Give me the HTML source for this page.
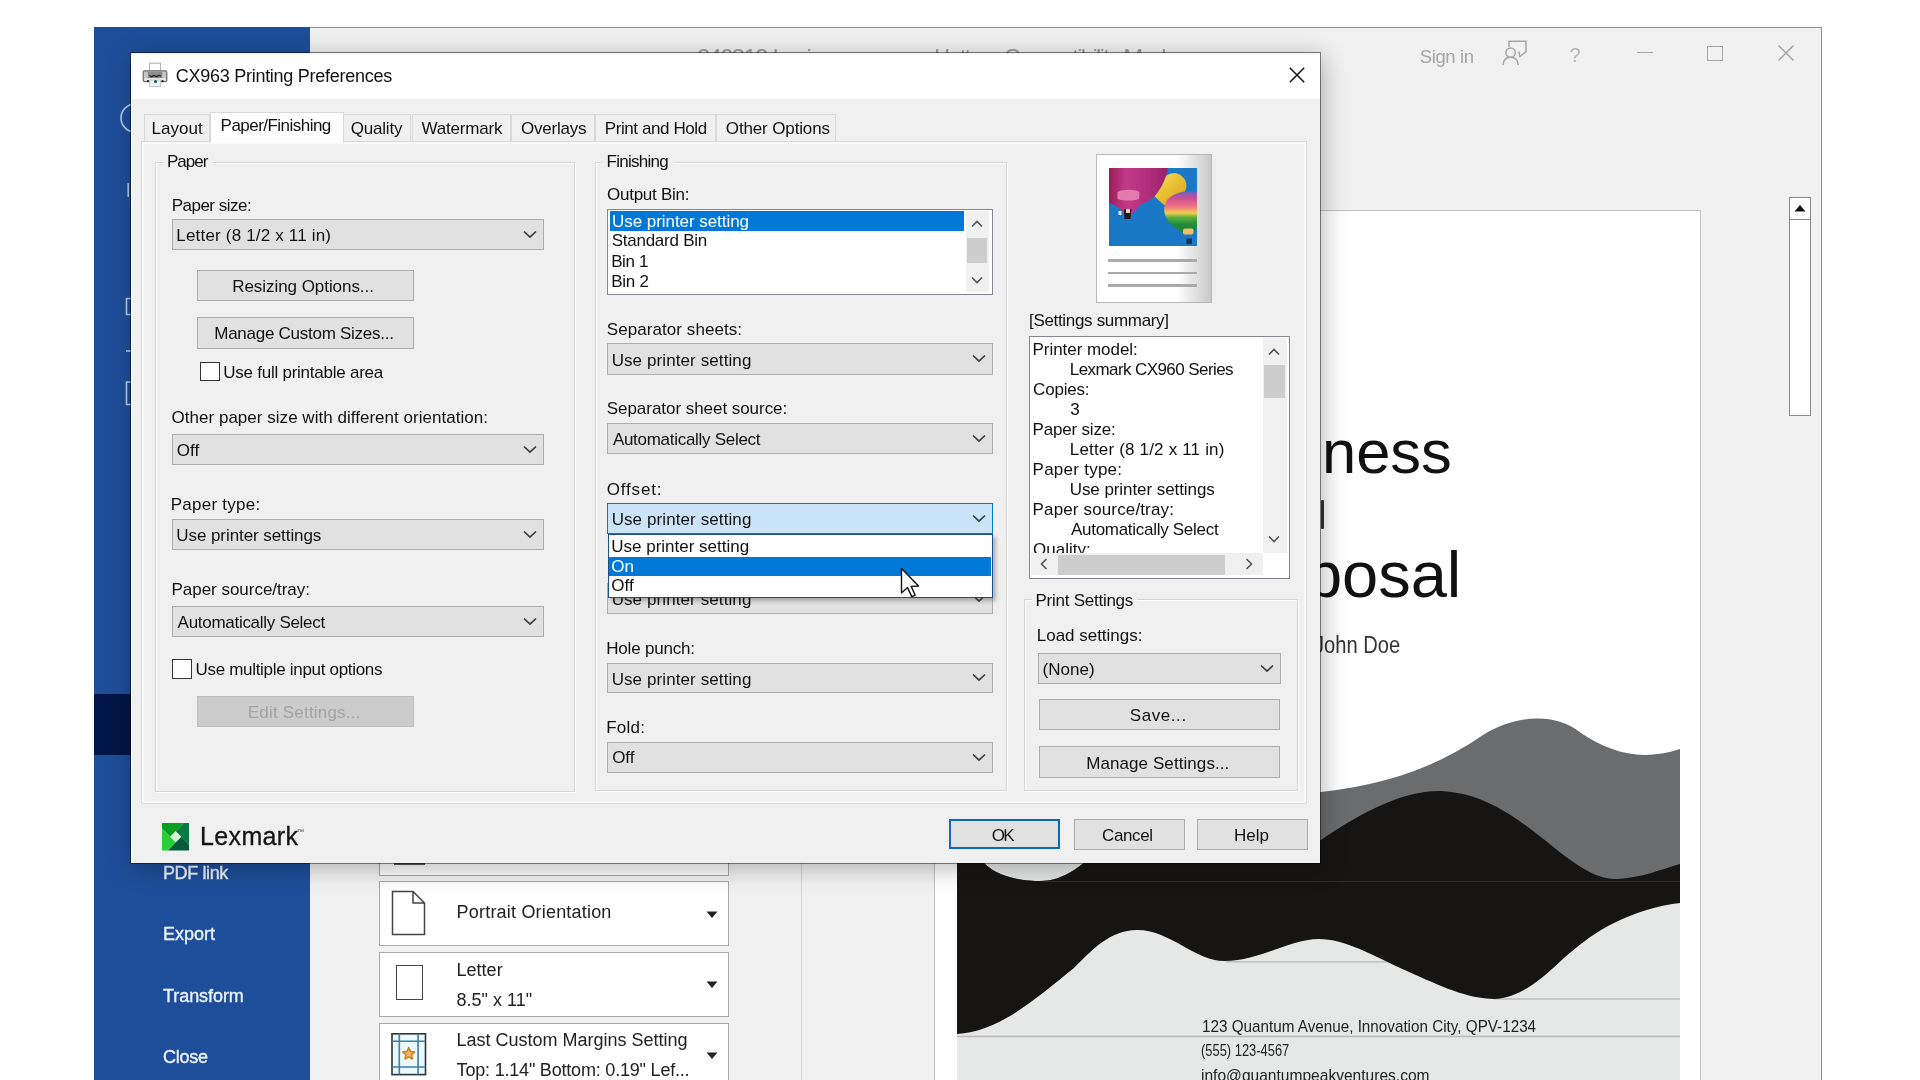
<!DOCTYPE html><html><head><meta charset="utf-8"><style>
html,body{margin:0;padding:0}
body{width:1920px;height:1080px;position:relative;overflow:hidden;background:#fff;font-family:"Liberation Sans",sans-serif;}
.t{position:absolute;white-space:nowrap;}
</style></head><body><div style="position:absolute;left:0;top:0;width:1920px;height:1080px;overflow:hidden;filter:blur(0.5px)">
<div style="position:absolute;left:94px;top:27px;width:1728px;height:1060px;background:#f1f1f1;border:1.5px solid #8f8f8f;border-bottom:none;box-sizing:border-box;"></div>
<div style="position:absolute;left:94px;top:27px;width:216px;height:1053px;background:#1e4e9a;box-shadow:inset 0 1px 0 #2c4a78;"></div>
<div style="position:absolute;left:94px;top:694px;width:216px;height:61px;background:#011548;"></div>
<div class="t" style="left:163.00px;top:862.26px;font-size:18px;line-height:22px;color:#eef3fb;letter-spacing:-0.387px;-webkit-text-stroke:0.35px #eef3fb;">PDF link</div>
<div class="t" style="left:163.00px;top:923.36px;font-size:18px;line-height:22px;color:#eef3fb;letter-spacing:-0.005px;-webkit-text-stroke:0.35px #eef3fb;">Export</div>
<div class="t" style="left:163.00px;top:984.56px;font-size:18px;line-height:22px;color:#eef3fb;letter-spacing:-0.068px;-webkit-text-stroke:0.35px #eef3fb;">Transform</div>
<div class="t" style="left:163.00px;top:1045.66px;font-size:18px;line-height:22px;color:#eef3fb;letter-spacing:-0.255px;-webkit-text-stroke:0.35px #eef3fb;">Close</div>
<div class="t" style="left:697.00px;top:42.98px;font-size:24px;line-height:30px;color:#9a9a9a;letter-spacing:-1.735px;">240312-business-proposal-letter  -  Compatibility Mode</div>
<div class="t" style="left:1419.70px;top:44.89px;font-size:18.5px;line-height:23px;color:#a5a5a5;letter-spacing:-0.378px;">Sign in</div>
<svg style="position:absolute;left:1495px;top:35px" width="40" height="35" viewBox="0 0 40 35"><g fill="none" stroke="#a8a8a8" stroke-width="1.5"><circle cx="15.6" cy="17.6" r="4.7"/><path d="M8 30 C8.5 24.5 11.5 22.3 15.6 22.3 C19.7 22.3 22.7 24.5 23.3 30"/><path d="M14 12 V6.3 H31 V16.8 L24.8 21.5 L23.8 16.5"/></g></svg>
<div class="t" style="left:1569.50px;top:42.57px;font-size:20px;line-height:25px;color:#b4b4b4;">?</div>
<div style="position:absolute;left:1637px;top:51.5px;width:16px;height:1.5px;background:#a5a5a5;"></div>
<div style="position:absolute;left:1707px;top:45.5px;width:15.5px;height:15.5px;border:1.5px solid #a5a5a5;box-sizing:border-box;"></div>
<svg style="position:absolute;left:1778px;top:45px" width="16" height="16" viewBox="0 0 16 16"><path d="M0.5 0.5 L15.5 15.5 M15.5 0.5 L0.5 15.5" stroke="#a5a5a5" stroke-width="1.5"/></svg>
<div style="position:absolute;left:379.2px;top:800px;width:350px;height:76px;background:#fff;border:1.5px solid #a8a8a8;box-sizing:border-box;"></div>
<div style="position:absolute;left:379.2px;top:881.4px;width:350px;height:64.60000000000002px;background:#fff;border:1.5px solid #a8a8a8;box-sizing:border-box;"></div>
<div style="position:absolute;left:379.2px;top:952px;width:350px;height:64.5px;background:#fff;border:1.5px solid #a8a8a8;box-sizing:border-box;"></div>
<div style="position:absolute;left:379.2px;top:1022.6px;width:350px;height:77.39999999999998px;background:#fff;border:1.5px solid #a8a8a8;box-sizing:border-box;"></div>
<div style="position:absolute;left:394px;top:862px;width:30.7px;height:2.5px;background:#555;"></div>
<svg style="position:absolute;left:391px;top:890px" width="36" height="46" viewBox="0 0 36 46"><path d="M1.5 1.5 H22 L33.5 13 V44.5 H1.5 Z M22 1.5 V13 H33.5" fill="#fff" stroke="#444" stroke-width="1.5"/></svg>
<div class="t" style="left:456.60px;top:900.76px;font-size:18px;line-height:22px;color:#222;letter-spacing:0.196px;">Portrait Orientation</div>
<svg style="position:absolute;left:706px;top:911px" width="12" height="8" viewBox="0 0 12 8"><path d="M0.5 0.5 H11.5 L6 7 Z" fill="#222"/></svg>
<div style="position:absolute;left:395.9px;top:965.3px;width:27.5px;height:35px;background:#fff;border:1.5px solid #444;box-sizing:border-box;"></div>
<div class="t" style="left:456.60px;top:958.86px;font-size:18px;line-height:22px;color:#222;">Letter</div>
<div class="t" style="left:456.60px;top:989.06px;font-size:18px;line-height:22px;color:#222;">8.5" x 11"</div>
<svg style="position:absolute;left:706px;top:981px" width="12" height="8" viewBox="0 0 12 8"><path d="M0.5 0.5 H11.5 L6 7 Z" fill="#222"/></svg>
<svg style="position:absolute;left:390px;top:1032px" width="38" height="46" viewBox="0 0 38 46"><rect x="2" y="1.8" width="33.5" height="40.8" fill="#eaf9fd" stroke="#333" stroke-width="1.6"/><g stroke="#3d7fa6" stroke-width="1.6"><path d="M9.3 1.8 V42.6 M28.1 1.8 V42.6 M2 9.3 H35.5 M2 35 H35.5"/></g><path d="M18.7 15.5 l1.8 3.9 l4.2 .5 l-3.1 2.9 l.8 4.2 l-3.7 -2.1 l-3.7 2.1 l.8 -4.2 l-3.1 -2.9 l4.2 -.5 Z" fill="#f2b860" stroke="#d07e18" stroke-width="1.5" stroke-linejoin="round"/></svg>
<div class="t" style="left:456.60px;top:1029.16px;font-size:18px;line-height:22px;color:#222;letter-spacing:-0.004px;">Last Custom Margins Setting</div>
<div class="t" style="left:456.60px;top:1058.76px;font-size:18px;line-height:22px;color:#222;letter-spacing:-0.197px;">Top: 1.14" Bottom: 0.19" Lef...</div>
<svg style="position:absolute;left:706px;top:1052px" width="12" height="8" viewBox="0 0 12 8"><path d="M0.5 0.5 H11.5 L6 7 Z" fill="#222"/></svg>
<div style="position:absolute;left:801px;top:800px;width:1.2px;height:280px;background:#d6d6d6;"></div>
<div style="position:absolute;left:933.5px;top:210px;width:767px;height:900px;background:#fff;border:1.2px solid #c3c3c3;box-sizing:border-box;"></div>
<svg style="position:absolute;left:0;top:0" width="1920" height="1080" viewBox="0 0 1920 1080">
<defs><clipPath id="pg"><rect x="957" y="200" width="723" height="900"/></clipPath></defs>
<g clip-path="url(#pg)">
<path d="M957 820 C1100 805 1250 800 1321 792 C1390 784 1440 765 1483 735 C1515 715 1555 712 1581 733 C1610 752 1640 762 1680 749 L1680 920 L957 920 Z" fill="#6b6c6d"/>
<path d="M975 858 L983 862 C1000 880 1030 881 1040 881 C1060 881 1075 870 1085 862 L1090 858 Z" fill="#e4e5e5"/>
<rect x="957" y="900" width="723" height="200" fill="#e6e7e7"/>
<path d="M1226 961.8 H1400 M957 1036.5 H1680" stroke="#b9b9b9" stroke-width="1.3"/>
<path d="M1494 999 H1680" stroke="#bdbdbd" stroke-width="1.3"/>
<path d="M957 840 L983 862 C1000 880 1030 881 1040 881 C1060 881 1075 870 1085 862 L1321 840 C1370 806 1410 790 1441 791 C1480 793 1510 812 1546 841 C1575 865 1597 880 1617 879 C1640 878 1660 870 1680 864 L1680 903 C1660 905 1635 912 1608 926 C1590 936 1578 946 1565 957 C1545 976 1520 999 1494 999 C1468 999 1440 986 1408 971.6 C1372 955 1345 939 1319 939 C1290 939 1260 961 1224.5 961 C1195 961 1170 930 1137 930 C1110 930 1092 950 1074 968 C1040 995 1000 1032 957 1034 Z" fill="#161514"/>
<path d="M1041 881.5 H1680" stroke="#2c2c2c" stroke-width="1"/>
</g></svg>
<div class="t" style="left:1202.30px;top:412.68px;font-size:61.5px;line-height:77px;color:#111;transform:scaleX(1.0000);transform-origin:0 0;">Business</div>
<div class="t" style="left:1204.75px;top:534.46px;font-size:65px;line-height:81px;color:#111;transform:scaleX(1.0000);transform-origin:0 0;">Proposal</div>
<div style="position:absolute;left:1320.5px;top:500px;width:3px;height:29px;background:#333;border-radius:1px;"></div>
<div class="t" style="left:1314.07px;top:631.35px;font-size:23.5px;line-height:29px;color:#333;transform:scaleX(0.8566);transform-origin:0 0;">John Doe</div>
<div class="t" style="left:1201.68px;top:1016.21px;font-size:17px;line-height:21px;color:#222;transform:scaleX(0.8965);transform-origin:0 0;">123 Quantum Avenue, Innovation City, QPV-1234</div>
<div class="t" style="left:1201.04px;top:1040.41px;font-size:17px;line-height:21px;color:#222;transform:scaleX(0.7594);transform-origin:0 0;">(555) 123-4567</div>
<div class="t" style="left:1201.38px;top:1064.61px;font-size:17px;line-height:21px;color:#222;transform:scaleX(0.9152);transform-origin:0 0;">info@quantumpeakventures.com</div>
<div style="position:absolute;left:1789px;top:197px;width:22px;height:23px;background:#fff;border:1.5px solid #8a8a8a;box-sizing:border-box;"></div>
<svg style="position:absolute;left:1794px;top:204px" width="12" height="8" viewBox="0 0 12 8"><path d="M0.5 7.5 H11.5 L6 1 Z" fill="#111"/></svg>
<div style="position:absolute;left:1789px;top:219px;width:22px;height:197px;background:#fff;border:1.5px solid #8a8a8a;box-sizing:border-box;"></div>
<svg style="position:absolute;left:100px;top:95px" width="40" height="320" viewBox="100 95 40 320"><g fill="none" stroke="#b7cdef" stroke-width="1.6"><circle cx="135" cy="118" r="14"/><path d="M128.2 183 V197"/><path d="M131 298.5 H126.5 V314.5 H131"/><path d="M126 351 H131"/><path d="M131 382 H126.5 V404.5 H131"/></g></svg>
<div style="position:absolute;left:129.5px;top:52px;width:1191.5px;height:811.8px;background:#f0f0f0;background-clip:padding-box;border:1.5px solid rgba(0,0,0,0.45);box-sizing:border-box;box-shadow:2px 4px 24px rgba(0,0,0,0.28), inset 1.5px 0 0 #f8f8f8;"></div>
<div style="position:absolute;left:131px;top:53.5px;width:1188.5px;height:45.5px;background:#fff;"></div>
<svg style="position:absolute;left:138px;top:58px" width="34" height="34" viewBox="0 0 34 34">
<rect x="11.5" y="5.2" width="11" height="8" fill="#fff" stroke="#b5b5b5" stroke-width="1.1"/>
<rect x="5.2" y="12.8" width="23.6" height="10.8" rx="1.5" fill="#c6c6c6" stroke="#6a6a6a" stroke-width="1.2"/>
<rect x="9.8" y="14" width="14.5" height="6" fill="#8c8c8c"/>
<path d="M11.5 17.5 l2 1.2 l2.5 -1.2 l2.5 1.2 l2.5 -1.2 l2 0.6" fill="none" stroke="#222" stroke-width="1.3"/>
<rect x="6.5" y="20.4" width="21" height="2.2" fill="#eeeeee"/>
<rect x="11.6" y="22" width="11" height="6.5" fill="#e4f6f8" stroke="#c4c4c4" stroke-width="1"/>
<circle cx="17.5" cy="23.6" r="1.5" fill="#0c5050"/>
<circle cx="10" cy="23" r="1" fill="#111"/><circle cx="24.5" cy="23" r="1" fill="#111"/>
</svg>
<div class="t" style="left:175.70px;top:64.56px;font-size:18px;line-height:22px;color:#111;letter-spacing:-0.261px;">CX963 Printing Preferences</div>
<svg style="position:absolute;left:1288.5px;top:67px" width="16" height="16" viewBox="0 0 16 16"><path d="M0.8 0.8 L15.2 15.2 M15.2 0.8 L0.8 15.2" stroke="#111" stroke-width="1.5"/></svg>
<div style="position:absolute;left:141px;top:141px;width:1166px;height:662.5px;background:#f0f0f0;border:1px solid #d9d9d9;box-shadow:inset -1.5px -1.5px 0 #fff, inset 2px 2px 0 #fafafa;box-sizing:border-box;"></div>
<div style="position:absolute;left:143.6px;top:114px;width:66.4px;height:27px;background:#f0f0f0;border:1px solid #d9d9d9;border-bottom:none;box-sizing:border-box;"></div>
<div class="t" style="left:151.40px;top:117.91px;font-size:17px;line-height:21px;color:#111;letter-spacing:0.052px;">Layout</div>
<div style="position:absolute;left:343.4px;top:114px;width:68.10000000000002px;height:27px;background:#f0f0f0;border:1px solid #d9d9d9;border-bottom:none;box-sizing:border-box;"></div>
<div class="t" style="left:350.70px;top:117.91px;font-size:17px;line-height:21px;color:#111;letter-spacing:-0.185px;">Quality</div>
<div style="position:absolute;left:411.5px;top:114px;width:99.19999999999999px;height:27px;background:#f0f0f0;border:1px solid #d9d9d9;border-bottom:none;box-sizing:border-box;"></div>
<div class="t" style="left:421.60px;top:117.91px;font-size:17px;line-height:21px;color:#111;letter-spacing:-0.198px;">Watermark</div>
<div style="position:absolute;left:510.7px;top:114px;width:84.59999999999997px;height:27px;background:#f0f0f0;border:1px solid #d9d9d9;border-bottom:none;box-sizing:border-box;"></div>
<div class="t" style="left:521.00px;top:117.91px;font-size:17px;line-height:21px;color:#111;letter-spacing:-0.239px;">Overlays</div>
<div style="position:absolute;left:595.3px;top:114px;width:120.90000000000009px;height:27px;background:#f0f0f0;border:1px solid #d9d9d9;border-bottom:none;box-sizing:border-box;"></div>
<div class="t" style="left:604.80px;top:117.91px;font-size:17px;line-height:21px;color:#111;letter-spacing:-0.418px;">Print and Hold</div>
<div style="position:absolute;left:716.2px;top:114px;width:119.79999999999995px;height:27px;background:#f0f0f0;border:1px solid #d9d9d9;border-bottom:none;box-sizing:border-box;"></div>
<div class="t" style="left:725.80px;top:117.91px;font-size:17px;line-height:21px;color:#111;letter-spacing:-0.136px;">Other Options</div>
<div style="position:absolute;left:209.5px;top:111.5px;width:134.5px;height:31.5px;background:#fff;border:1px solid #d9d9d9;border-bottom:none;box-sizing:border-box;"></div>
<div class="t" style="left:220.60px;top:114.61px;font-size:17px;line-height:21px;color:#111;letter-spacing:-0.530px;">Paper/Finishing</div>
<div style="position:absolute;left:154.5px;top:161.5px;width:420.5px;height:630.5px;border:1px solid #d5d5d5;box-shadow:inset 1px 1px 0 #fff, 1px 1px 0 #fff;box-sizing:border-box;"></div>
<div style="position:absolute;left:163px;top:155.5px;width:49.5px;height:12px;background:#f0f0f0;"></div>
<div class="t" style="left:167.00px;top:151.41px;font-size:17px;line-height:21px;color:#111;letter-spacing:-0.966px;">Paper</div>
<div class="t" style="left:171.70px;top:194.61px;font-size:17px;line-height:21px;color:#111;letter-spacing:-0.504px;">Paper size:</div>
<div style="position:absolute;left:172px;top:219.3px;width:371.70000000000005px;height:31.099999999999994px;background:#e1e1e1;border:1.5px solid #adadad;box-sizing:border-box;"></div>
<div class="t" style="left:176.35px;top:225.41px;font-size:17px;line-height:21px;color:#111;letter-spacing:0.179px;">Letter (8 1/2 x 11 in)</div>
<svg width="14" height="9" viewBox="0 0 14 9" style="position:absolute;left:522.7px;top:230.35000000000002px"><path d="M1 1.5 L7 7.2 L13 1.5" fill="none" stroke="#3c3c3c" stroke-width="1.7"/></svg>
<div style="position:absolute;left:196.75px;top:270px;width:217.5px;height:31.25px;background:#e1e1e1;border:1.5px solid #adadad;box-sizing:border-box;"></div>
<div class="t" style="left:232.25px;top:276.11px;font-size:17px;line-height:21px;color:#111;letter-spacing:-0.056px;">Resizing Options...</div>
<div style="position:absolute;left:196.75px;top:317px;width:217.5px;height:31.75px;background:#e1e1e1;border:1.5px solid #adadad;box-sizing:border-box;"></div>
<div class="t" style="left:214.25px;top:323.11px;font-size:17px;line-height:21px;color:#111;letter-spacing:-0.262px;">Manage Custom Sizes...</div>
<div style="position:absolute;left:200px;top:361.75px;width:19.5px;height:19.5px;background:#fff;border:1.5px solid #333;box-sizing:border-box;"></div>
<div class="t" style="left:223.25px;top:361.61px;font-size:17px;line-height:21px;color:#111;letter-spacing:-0.244px;">Use full printable area</div>
<div class="t" style="left:171.50px;top:407.36px;font-size:17px;line-height:21px;color:#111;letter-spacing:0.028px;">Other paper size with different orientation:</div>
<div style="position:absolute;left:172px;top:434.25px;width:371.70000000000005px;height:30.75px;background:#e1e1e1;border:1.5px solid #adadad;box-sizing:border-box;"></div>
<div class="t" style="left:176.85px;top:440.36px;font-size:17px;line-height:21px;color:#111;letter-spacing:0.000px;">Off</div>
<svg width="14" height="9" viewBox="0 0 14 9" style="position:absolute;left:522.7px;top:445.125px"><path d="M1 1.5 L7 7.2 L13 1.5" fill="none" stroke="#3c3c3c" stroke-width="1.7"/></svg>
<div class="t" style="left:170.75px;top:493.61px;font-size:17px;line-height:21px;color:#111;letter-spacing:0.255px;">Paper type:</div>
<div style="position:absolute;left:172px;top:518.5px;width:371.70000000000005px;height:31.0px;background:#e1e1e1;border:1.5px solid #adadad;box-sizing:border-box;"></div>
<div class="t" style="left:176.35px;top:524.61px;font-size:17px;line-height:21px;color:#111;letter-spacing:-0.076px;">Use printer settings</div>
<svg width="14" height="9" viewBox="0 0 14 9" style="position:absolute;left:522.7px;top:529.5px"><path d="M1 1.5 L7 7.2 L13 1.5" fill="none" stroke="#3c3c3c" stroke-width="1.7"/></svg>
<div class="t" style="left:171.50px;top:579.11px;font-size:17px;line-height:21px;color:#111;letter-spacing:-0.023px;">Paper source/tray:</div>
<div style="position:absolute;left:172px;top:606.25px;width:371.70000000000005px;height:30.5px;background:#e1e1e1;border:1.5px solid #adadad;box-sizing:border-box;"></div>
<div class="t" style="left:177.60px;top:612.36px;font-size:17px;line-height:21px;color:#111;letter-spacing:-0.287px;">Automatically Select</div>
<svg width="14" height="9" viewBox="0 0 14 9" style="position:absolute;left:522.7px;top:617.0px"><path d="M1 1.5 L7 7.2 L13 1.5" fill="none" stroke="#3c3c3c" stroke-width="1.7"/></svg>
<div style="position:absolute;left:172px;top:659.25px;width:19.5px;height:19.5px;background:#fff;border:1.5px solid #333;box-sizing:border-box;"></div>
<div class="t" style="left:195.50px;top:658.61px;font-size:17px;line-height:21px;color:#111;letter-spacing:-0.306px;">Use multiple input options</div>
<div style="position:absolute;left:196.75px;top:695.75px;width:217.5px;height:31.25px;background:#cccccc;border:1.5px solid #bfbfbf;box-sizing:border-box;"></div>
<div class="t" style="left:247.75px;top:702.36px;font-size:17px;line-height:21px;color:#a3a3a3;letter-spacing:0.200px;">Edit Settings...</div>
<div style="position:absolute;left:594.5px;top:162px;width:412.20000000000005px;height:628.5px;border:1px solid #d5d5d5;box-shadow:inset 1px 1px 0 #fff, 1px 1px 0 #fff;box-sizing:border-box;"></div>
<div style="position:absolute;left:602.5px;top:156px;width:70.3px;height:12px;background:#f0f0f0;"></div>
<div class="t" style="left:606.50px;top:151.41px;font-size:17px;line-height:21px;color:#111;letter-spacing:-0.717px;">Finishing</div>
<div class="t" style="left:607.00px;top:184.11px;font-size:17px;line-height:21px;color:#111;letter-spacing:-0.255px;">Output Bin:</div>
<div style="position:absolute;left:607.3px;top:209px;width:386px;height:85.6px;background:#fff;border:1.5px solid #828790;box-sizing:border-box;"></div>
<div style="position:absolute;left:610px;top:211.3px;width:354.3px;height:20px;background:#0078d7;"></div>
<div class="t" style="left:612.00px;top:210.61px;font-size:17px;line-height:21px;color:#fff;letter-spacing:-0.053px;">Use printer setting</div>
<div class="t" style="left:611.65px;top:230.31px;font-size:17px;line-height:21px;color:#111;letter-spacing:-0.245px;">Standard Bin</div>
<div class="t" style="left:611.15px;top:251.11px;font-size:17px;line-height:21px;color:#111;letter-spacing:-0.387px;">Bin 1</div>
<div class="t" style="left:611.15px;top:270.81px;font-size:17px;line-height:21px;color:#111;letter-spacing:-0.213px;">Bin 2</div>
<div style="position:absolute;left:966px;top:211px;width:22.6px;height:81px;background:#f0f0f0;"></div>
<div style="position:absolute;left:967px;top:237.5px;width:20px;height:25.5px;background:#cdcdcd;"></div>
<svg style="position:absolute;left:971px;top:220px" width="12" height="8" viewBox="0 0 12 8"><path d="M1 6.5 L6 1.5 L11 6.5" fill="none" stroke="#555" stroke-width="1.6"/></svg>
<svg style="position:absolute;left:971px;top:276px" width="12" height="8" viewBox="0 0 12 8"><path d="M1 1.5 L6 6.5 L11 1.5" fill="none" stroke="#555" stroke-width="1.6"/></svg>
<div class="t" style="left:606.75px;top:319.01px;font-size:17px;line-height:21px;color:#111;letter-spacing:0.069px;">Separator sheets:</div>
<div style="position:absolute;left:607.3px;top:343.2px;width:385.9000000000001px;height:31.5px;background:#e1e1e1;border:1.5px solid #adadad;box-sizing:border-box;"></div>
<div class="t" style="left:611.65px;top:349.61px;font-size:17px;line-height:21px;color:#111;letter-spacing:0.097px;">Use printer setting</div>
<svg width="14" height="9" viewBox="0 0 14 9" style="position:absolute;left:972.2px;top:354.45px"><path d="M1 1.5 L7 7.2 L13 1.5" fill="none" stroke="#3c3c3c" stroke-width="1.7"/></svg>
<div class="t" style="left:606.75px;top:398.11px;font-size:17px;line-height:21px;color:#111;letter-spacing:-0.043px;">Separator sheet source:</div>
<div style="position:absolute;left:607.3px;top:422.6px;width:385.9000000000001px;height:31.799999999999955px;background:#e1e1e1;border:1.5px solid #adadad;box-sizing:border-box;"></div>
<div class="t" style="left:612.90px;top:428.71px;font-size:17px;line-height:21px;color:#111;letter-spacing:-0.287px;">Automatically Select</div>
<svg width="14" height="9" viewBox="0 0 14 9" style="position:absolute;left:972.2px;top:434.0px"><path d="M1 1.5 L7 7.2 L13 1.5" fill="none" stroke="#3c3c3c" stroke-width="1.7"/></svg>
<div class="t" style="left:606.75px;top:478.71px;font-size:17px;line-height:21px;color:#111;letter-spacing:0.833px;">Offset:</div>
<div style="position:absolute;left:607.3px;top:582.5px;width:385.9000000000001px;height:31.100000000000023px;background:#e1e1e1;border:1.5px solid #adadad;box-sizing:border-box;"></div>
<div class="t" style="left:611.65px;top:589.11px;font-size:17px;line-height:21px;color:#111;letter-spacing:0.097px;">Use printer setting</div>
<svg width="14" height="9" viewBox="0 0 14 9" style="position:absolute;left:972.2px;top:593.55px"><path d="M1 1.5 L7 7.2 L13 1.5" fill="none" stroke="#3c3c3c" stroke-width="1.7"/></svg>
<div style="position:absolute;left:607.3px;top:503px;width:385.9000000000001px;height:31px;background:#cce4f7;border:1.5px solid #0078d7;box-sizing:border-box;"></div>
<div class="t" style="left:611.65px;top:509.21px;font-size:17px;line-height:21px;color:#111;letter-spacing:0.097px;">Use printer setting</div>
<svg width="14" height="9" viewBox="0 0 14 9" style="position:absolute;left:972.2px;top:514.0px"><path d="M1 1.5 L7 7.2 L13 1.5" fill="none" stroke="#3c3c3c" stroke-width="1.7"/></svg>
<div style="position:absolute;left:607.8px;top:533.5px;width:385px;height:64px;background:#fff;border:1.5px solid #1f4f8a;box-sizing:border-box;box-shadow:3px 3px 4px rgba(0,0,0,0.25);"></div>
<div class="t" style="left:611.25px;top:535.91px;font-size:17px;line-height:21px;color:#111;">Use printer setting</div>
<div style="position:absolute;left:609.3px;top:556.5px;width:382px;height:19px;background:#0078d7;"></div>
<div class="t" style="left:611.25px;top:555.61px;font-size:17px;line-height:21px;color:#fff;">On</div>
<div class="t" style="left:611.25px;top:575.21px;font-size:17px;line-height:21px;color:#111;">Off</div>
<div class="t" style="left:606.25px;top:637.71px;font-size:17px;line-height:21px;color:#111;letter-spacing:-0.190px;">Hole punch:</div>
<div style="position:absolute;left:607.3px;top:662.7px;width:385.9000000000001px;height:30.299999999999955px;background:#e1e1e1;border:1.5px solid #adadad;box-sizing:border-box;"></div>
<div class="t" style="left:611.65px;top:668.81px;font-size:17px;line-height:21px;color:#111;letter-spacing:0.097px;">Use printer setting</div>
<svg width="14" height="9" viewBox="0 0 14 9" style="position:absolute;left:972.2px;top:673.35px"><path d="M1 1.5 L7 7.2 L13 1.5" fill="none" stroke="#3c3c3c" stroke-width="1.7"/></svg>
<div class="t" style="left:606.25px;top:716.61px;font-size:17px;line-height:21px;color:#111;letter-spacing:0.225px;">Fold:</div>
<div style="position:absolute;left:607.3px;top:741.8px;width:385.9000000000001px;height:31.200000000000045px;background:#e1e1e1;border:1.5px solid #adadad;box-sizing:border-box;"></div>
<div class="t" style="left:612.15px;top:747.41px;font-size:17px;line-height:21px;color:#111;letter-spacing:0.000px;">Off</div>
<svg width="14" height="9" viewBox="0 0 14 9" style="position:absolute;left:972.2px;top:752.9px"><path d="M1 1.5 L7 7.2 L13 1.5" fill="none" stroke="#3c3c3c" stroke-width="1.7"/></svg>
<div style="position:absolute;left:1095.5px;top:154px;width:116px;height:148.5px;background:linear-gradient(90deg,#fff 0%,#fff 70%,#c8c8c8 100%);border:1.5px solid #b8b8b8;box-sizing:border-box;"></div>
<svg style="position:absolute;left:1108.8px;top:168.4px" width="88" height="78" viewBox="0 0 88 78">
<defs>
<linearGradient id="mc" x1="0" y1="0" x2="0" y2="1">
<stop offset="0" stop-color="#6a60c0"/><stop offset="0.18" stop-color="#d05090"/><stop offset="0.38" stop-color="#f07a80"/>
<stop offset="0.52" stop-color="#f0d050"/><stop offset="0.62" stop-color="#60b040"/><stop offset="0.8" stop-color="#208a38"/><stop offset="1" stop-color="#208a38"/>
</linearGradient>
<linearGradient id="mg" x1="0" y1="0" x2="1" y2="0">
<stop offset="0" stop-color="#9a1e58"/><stop offset="0.3" stop-color="#c23a88"/><stop offset="0.6" stop-color="#b43080"/><stop offset="1" stop-color="#9a2068"/>
</linearGradient>
<linearGradient id="yl" x1="0" y1="0" x2="1" y2="1">
<stop offset="0" stop-color="#f4e070"/><stop offset="0.5" stop-color="#e8c030"/><stop offset="1" stop-color="#d8a020"/>
</linearGradient>
</defs>
<rect width="88" height="78" fill="#1b78c6"/>
<path d="M44 27 C46 16 56 5 66 5 C74 6 79 14 77 21 C73 30 62 36 55 37 Z" fill="url(#yl)"/>
<path d="M0 0 H59 C57 12 51 22 45 29 C40 33 35 35 31 37 C28 41 25 45 22 46 L15 45 C11 41 7 37 0 35 Z" fill="url(#mg)"/>
<path d="M8.5 24 C14 21 26 21 30.5 24 L30 31 C24 33 15 33 8.5 31 Z" fill="#e47aae"/>
<path d="M15 41 H22.5 L21.5 51 H15.5 Z" fill="#2a1018"/>
<rect x="17" y="41" width="4" height="4" fill="#f0d0b8"/>
<rect x="9.5" y="43" width="3" height="4" fill="#e8e8f0"/>
<path d="M88 24 C80 22 62 24 57 34 C53 42 56 50 62 56 C66 60 71 63 74 65 H84 C86 63 88 60 88 58 Z" fill="url(#mc)"/>
<rect x="74" y="60.5" width="10.5" height="6" rx="2" fill="#f0c070"/>
<rect x="77.5" y="70.5" width="5.5" height="5.5" fill="#203048"/>
</svg>
<div style="position:absolute;left:1108px;top:259px;width:89px;height:2.5px;background:#a9a9a9;"></div>
<div style="position:absolute;left:1108px;top:271.5px;width:89px;height:2.5px;background:#a9a9a9;"></div>
<div style="position:absolute;left:1108px;top:284px;width:89px;height:2.5px;background:#a9a9a9;"></div>
<div class="t" style="left:1029.00px;top:309.61px;font-size:17px;line-height:21px;color:#111;letter-spacing:-0.323px;">[Settings summary]</div>
<div style="position:absolute;left:1029.4px;top:336px;width:260.6px;height:243.2px;background:#fff;border:1.5px solid #828790;box-sizing:border-box;"></div>
<div class="t" style="left:1032.55px;top:338.61px;font-size:17px;line-height:21px;color:#111;letter-spacing:-0.046px;">Printer model:</div>
<div class="t" style="left:1069.75px;top:358.61px;font-size:17px;line-height:21px;color:#111;letter-spacing:-0.579px;">Lexmark CX960 Series</div>
<div class="t" style="left:1033.05px;top:378.61px;font-size:17px;line-height:21px;color:#111;letter-spacing:-0.183px;">Copies:</div>
<div class="t" style="left:1070.25px;top:398.61px;font-size:17px;line-height:21px;color:#111;letter-spacing:0.000px;">3</div>
<div class="t" style="left:1032.55px;top:418.61px;font-size:17px;line-height:21px;color:#111;letter-spacing:-0.185px;">Paper size:</div>
<div class="t" style="left:1069.75px;top:438.61px;font-size:17px;line-height:21px;color:#111;letter-spacing:0.179px;">Letter (8 1/2 x 11 in)</div>
<div class="t" style="left:1032.55px;top:458.61px;font-size:17px;line-height:21px;color:#111;letter-spacing:0.255px;">Paper type:</div>
<div class="t" style="left:1069.75px;top:478.61px;font-size:17px;line-height:21px;color:#111;letter-spacing:-0.076px;">Use printer settings</div>
<div class="t" style="left:1032.55px;top:498.61px;font-size:17px;line-height:21px;color:#111;letter-spacing:0.144px;">Paper source/tray:</div>
<div class="t" style="left:1071.00px;top:518.61px;font-size:17px;line-height:21px;color:#111;letter-spacing:-0.287px;">Automatically Select</div>
<div class="t" style="left:1033.05px;top:538.61px;font-size:17px;line-height:21px;color:#111;letter-spacing:0.000px;">Quality:</div>
<div style="position:absolute;left:1262.7px;top:338px;width:24px;height:215px;background:#f0f0f0;"></div>
<div style="position:absolute;left:1264px;top:364.6px;width:21px;height:33.2px;background:#cdcdcd;"></div>
<svg style="position:absolute;left:1268px;top:348px" width="12" height="8" viewBox="0 0 12 8"><path d="M1 6.5 L6 1.5 L11 6.5" fill="none" stroke="#555" stroke-width="1.6"/></svg>
<svg style="position:absolute;left:1268px;top:535px" width="12" height="8" viewBox="0 0 12 8"><path d="M1 1.5 L6 6.5 L11 1.5" fill="none" stroke="#555" stroke-width="1.6"/></svg>
<div style="position:absolute;left:1031px;top:553.3px;width:231.7px;height:22px;background:#f0f0f0;"></div>
<div style="position:absolute;left:1058px;top:554.5px;width:167px;height:20px;background:#cdcdcd;"></div>
<svg style="position:absolute;left:1040px;top:558px" width="8" height="12" viewBox="0 0 8 12"><path d="M6.5 1 L1.5 6 L6.5 11" fill="none" stroke="#555" stroke-width="1.6"/></svg>
<svg style="position:absolute;left:1245px;top:558px" width="8" height="12" viewBox="0 0 8 12"><path d="M1.5 1 L6.5 6 L1.5 11" fill="none" stroke="#555" stroke-width="1.6"/></svg>
<div style="position:absolute;left:1023.6px;top:599.4px;width:274.19999999999993px;height:191.20000000000005px;border:1px solid #d5d5d5;box-shadow:inset 1px 1px 0 #fff, 1px 1px 0 #fff;box-sizing:border-box;"></div>
<div style="position:absolute;left:1031.5px;top:593.4px;width:105.8px;height:12px;background:#f0f0f0;"></div>
<div class="t" style="left:1035.50px;top:590.01px;font-size:17px;line-height:21px;color:#111;letter-spacing:-0.254px;">Print Settings</div>
<div class="t" style="left:1036.75px;top:625.31px;font-size:17px;line-height:21px;color:#111;letter-spacing:-0.015px;">Load settings:</div>
<div style="position:absolute;left:1038px;top:653px;width:243.4000000000001px;height:31.200000000000045px;background:#e1e1e1;border:1.5px solid #adadad;box-sizing:border-box;"></div>
<div class="t" style="left:1042.60px;top:659.41px;font-size:17px;line-height:21px;color:#111;letter-spacing:0.000px;">(None)</div>
<svg width="14" height="9" viewBox="0 0 14 9" style="position:absolute;left:1260.4px;top:664.1px"><path d="M1 1.5 L7 7.2 L13 1.5" fill="none" stroke="#3c3c3c" stroke-width="1.7"/></svg>
<div style="position:absolute;left:1039.4px;top:698.9px;width:240.5999999999999px;height:31.100000000000023px;background:#e1e1e1;border:1.5px solid #adadad;box-sizing:border-box;"></div>
<div class="t" style="left:1129.75px;top:705.31px;font-size:17px;line-height:21px;color:#111;letter-spacing:0.575px;">Save...</div>
<div style="position:absolute;left:1039.4px;top:746px;width:240.5999999999999px;height:31.799999999999955px;background:#e1e1e1;border:1.5px solid #adadad;box-sizing:border-box;"></div>
<div class="t" style="left:1086.25px;top:753.31px;font-size:17px;line-height:21px;color:#111;letter-spacing:0.076px;">Manage Settings...</div>
<svg style="position:absolute;left:161.8px;top:823.2px" width="27.4" height="27.6" viewBox="0 0 100 100" preserveAspectRatio="none">
<path d="M0 0 H79 L50 30 L30 50 L0 20 Z" fill="#05a01f"/>
<path d="M0 20 L30 50 L50 70 L23 100 H0 Z" fill="#26cf36"/>
<path d="M79 0 H100 V80 L70 50 L50 30 Z" fill="#087a44"/>
<path d="M23 100 L50 70 L70 50 L100 80 V100 Z" fill="#055b3a"/>
<path d="M50 30 L70 50 L50 70 L30 50 Z" fill="#cff7d6"/>
</svg>
<div class="t" style="left:200.00px;top:821.23px;font-size:25px;line-height:31px;color:#141414;letter-spacing:0.356px;-webkit-text-stroke:0.3px #141414;">Lexmark</div>
<div class="t" style="left:297.00px;top:827.07px;font-size:7px;line-height:9px;color:#444;">™</div>
<div style="position:absolute;left:949.4px;top:818.9px;width:110.30000000000007px;height:30.399999999999977px;background:#e1e1e1;border:2.5px solid #0a68c0;box-sizing:border-box;"></div>
<div class="t" style="left:991.75px;top:825.11px;font-size:17px;line-height:21px;color:#111;letter-spacing:-1.600px;">OK</div>
<div style="position:absolute;left:1073.6px;top:818.9px;width:111.10000000000014px;height:31.100000000000023px;background:#e1e1e1;border:1.5px solid #adadad;box-sizing:border-box;"></div>
<div class="t" style="left:1102.05px;top:825.11px;font-size:17px;line-height:21px;color:#111;letter-spacing:-0.370px;">Cancel</div>
<div style="position:absolute;left:1197.2px;top:818.9px;width:111.09999999999991px;height:31.100000000000023px;background:#e1e1e1;border:1.5px solid #adadad;box-sizing:border-box;"></div>
<div class="t" style="left:1234.05px;top:825.11px;font-size:17px;line-height:21px;color:#111;letter-spacing:0.000px;">Help</div>
<svg style="position:absolute;left:899.5px;top:567px" width="22" height="32" viewBox="-1 -1 22 32"><path d="M0.5 0.5 V25 L6.5 19.6 L10.8 28.6 L14.2 27.2 L10.2 18.4 L17.6 18 Z" fill="#fff" stroke="#111" stroke-width="1.4" stroke-linejoin="round"/></svg>
</div></body></html>
